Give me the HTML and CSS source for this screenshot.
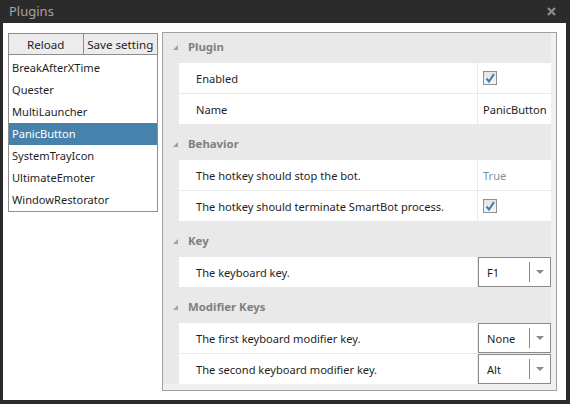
FILE: index.html
```html
<!DOCTYPE html>
<html>
<head>
<meta charset="utf-8">
<link rel="stylesheet" href="styles.css">
</head>
<body>
<div class="window">
  <div class="titlebar">
    <span class="title">Plugins</span>
    <svg class="close" width="9" height="9" viewBox="0 0 9 9"><path d="M1 1L8 8M8 1L1 8" stroke="#8a8a8a" stroke-width="2.4"/></svg>
  </div>
  <div class="content">
    <div class="left">
      <div class="buttons">
        <div class="btn">Reload</div>
        <div class="btn">Save setting</div>
      </div>
      <div class="list">
        <div class="item">BreakAfterXTime</div>
        <div class="item">Quester</div>
        <div class="item">MultiLauncher</div>
        <div class="item selected">PanicButton</div>
        <div class="item">SystemTrayIcon</div>
        <div class="item">UltimateEmoter</div>
        <div class="item">WindowRestorator</div>
      </div>
    </div>
    <div class="grid">
      <div class="inner">
        <div class="section">
          <div class="header"><span class="tri"></span>Plugin</div>
          <div class="row"><div class="label">Enabled</div><div class="value"><span class="check"><svg width="12" height="12" viewBox="0 0 12 12"><path d="M2.5 6.5L5 9.5L10 2" stroke="#3b7bb5" stroke-width="2" fill="none"/></svg></span></div></div>
          <div class="row"><div class="label">Name</div><div class="value">PanicButton</div></div>
        </div>
        <div class="section">
          <div class="header"><span class="tri"></span>Behavior</div>
          <div class="row"><div class="label">The hotkey should stop the bot.</div><div class="value muted">True</div></div>
          <div class="row"><div class="label">The hotkey should terminate SmartBot process.</div><div class="value"><span class="check"><svg width="12" height="12" viewBox="0 0 12 12"><path d="M2.5 6.5L5 9.5L10 2" stroke="#3b7bb5" stroke-width="2" fill="none"/></svg></span></div></div>
        </div>
        <div class="section">
          <div class="header"><span class="tri"></span>Key</div>
          <div class="row"><div class="label">The keyboard key.</div><div class="value combo-cell"><div class="combo"><span class="combo-text">F1</span><span class="combo-btn"><span class="arrow"></span></span></div></div></div>
        </div>
        <div class="section">
          <div class="header"><span class="tri"></span>Modifier Keys</div>
          <div class="row"><div class="label">The first keyboard modifier key.</div><div class="value combo-cell"><div class="combo"><span class="combo-text">None</span><span class="combo-btn"><span class="arrow"></span></span></div></div></div>
          <div class="row"><div class="label">The second keyboard modifier key.</div><div class="value combo-cell"><div class="combo"><span class="combo-text">Alt</span><span class="combo-btn"><span class="arrow"></span></span></div></div></div>
        </div>
      </div>
    </div>
  </div>
</div>
</body>
</html>
```
FILE: styles.css
```css
* { box-sizing: border-box; }
html, body { margin: 0; padding: 0; }
body {
  background: #2b2b2b;
  font-family: "Noto Sans", "Open Sans", sans-serif;
  font-size: 11.1px;
  color: #1e1e1e;
}
.window {
  width: 570px;
  height: 404px;
  background: #2b2b2b;
  display: flex;
  flex-direction: column;
}
.titlebar {
  height: 23px;
  display: flex;
  align-items: center;
  justify-content: space-between;
  padding: 0 14px 1px 9px;
}
.title {
  color: #a3a3a3;
  font-size: 13px;
}
.close { display: block; }
.content {
  margin: 0 4px 4px 3px;
  height: 377px;
  background: #fff;
  display: flex;
  gap: 4px;
  padding: 9px 9px 0 5px;
  align-items: flex-start;
}
.left {
  width: 150px;
  margin-top: 1px;
}
.buttons {
  display: flex;
  height: 22px;
}
.btn {
  flex: 1;
  background: #ececec;
  border: 1px solid #8e8e8e;
  display: flex;
  align-items: center;
  justify-content: center;
  font-size: 11.6px;
  color: #1e1e1e;
}
.btn + .btn { border-left: none; }
.list {
  border: 1px solid #8e8e8e;
  border-top: none;
  padding-top: 2px;
}
.item {
  height: 22px;
  line-height: 22px;
  padding-left: 3px;
  font-size: 11.1px;
}
.item.selected {
  background: #4682ac;
  color: #fff;
}
.grid {
  width: 395px;
  height: 359px;
  border: 1px solid #a0a0a0;
  background: #f0f0f0;
  padding-right: 5px;
}
.inner {
  background: #e9e9e9;
}
.section {
  padding-bottom: 6px;
  background: #e9e9e9;
}
.section:last-child { padding-bottom: 0; }
.header {
  height: 30px;
  display: flex;
  align-items: center;
  padding-left: 10px;
  padding-bottom: 3px;
  font-weight: bold;
  color: #808080;
  font-size: 11.4px;
}
.tri {
  width: 0;
  height: 0;
  border-style: solid;
  border-width: 0 0 5px 5px;
  border-color: transparent transparent #a0a0a0 transparent;
  margin-right: 10px;
  margin-top: 1px;
}
.row {
  margin-left: 16px;
  height: 30px;
  background: #fff;
  display: flex;
}
.row + .row {
  margin-top: 1px;
}
.label {
  flex: 1;
  padding-left: 17px;
  display: flex;
  align-items: center;
  border-right: 1px solid #e9e9e9;
}
.value {
  width: 73px;
  display: flex;
  align-items: center;
  padding-left: 5px;
}
.muted { color: #7b90a6; }
.check {
  width: 14px;
  height: 14px;
  border: 1px solid #8f8f8f;
  background: linear-gradient(#e4e4e4, #f6f6f6);
  display: flex;
  align-items: center;
  justify-content: center;
}
.check svg { display: block; }
.combo-cell { padding: 0; }
.combo {
  width: 100%;
  height: 100%;
  border: 1px solid #8a8a8a;
  display: flex;
  align-items: center;
}
.combo-text {
  flex: 1;
  padding-left: 8px;
}
.combo-btn {
  width: 21px;
  height: 20px;
  border-left: 1px solid #8a8a8a;
  display: flex;
  align-items: center;
  justify-content: center;
}
.arrow {
  width: 0;
  height: 0;
  border-left: 4px solid transparent;
  border-right: 4px solid transparent;
  border-top: 4px solid #8a8a8a;
}
```
